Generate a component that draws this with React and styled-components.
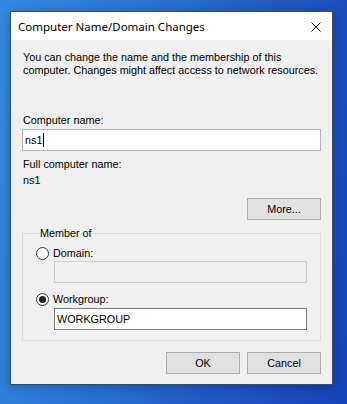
import React from 'react';
import styled, { createGlobalStyle } from 'styled-components';

const GlobalStyle = createGlobalStyle`
  html, body {
    margin: 0;
    padding: 0;
    height: 100%;
    overflow: hidden;
  }
  body {
    background: linear-gradient(100deg, #3389e0 0%, #2a74d6 35%, #1f56c2 70%, #1644b6 100%);
    font-family: "Liberation Sans", Arial, sans-serif;
  }
`;

const Desktop = styled.div`
  padding: 11px 0 0 10px;
`;

const Dialog = styled.div`
  width: 321px;
  height: 372px;
  border: 1px solid #3b4b63;
  background: #f0f0f0;
  display: flex;
  flex-direction: column;
  box-shadow: 0 2px 10px rgba(0, 0, 0, 0.25);
`;

const TitleBar = styled.div`
  height: 28px;
  background: #ffffff;
  display: flex;
  align-items: center;
  justify-content: space-between;
  padding: 0 11px 0 7px;
  font-family: "Segoe UI", "Noto Sans", sans-serif;
  font-size: 11.5px;
  color: #000;
`;

const Close = styled.svg`
  width: 10px;
  height: 10px;
  margin-top: 1px;
`;

const Content = styled.div`
  padding: 0 11px;
  font-size: 10.8px;
  line-height: 13px;
  color: #000;
  display: flex;
  flex-direction: column;
`;

const Text = styled.div`
  margin-top: ${p => p.$mt || 0}px;
  padding-left: 1px;
  white-space: nowrap;
`;

const Field = styled.div`
  box-sizing: border-box;
  height: ${p => p.$h || 22}px;
  margin-top: ${p => p.$mt || 0}px;
  margin-left: ${p => p.$ml || 0}px;
  border: 1px solid ${p => (p.$disabled ? '#cccccc' : p.$focus ? '#a9b7cf' : '#7a7a7a')};
  background: ${p => (p.$disabled ? '#f0f0f0' : '#ffffff')};
  padding: 0 2px;
  display: flex;
  align-items: center;
`;

const Caret = styled.span`
  display: inline-block;
  width: 1px;
  height: 14px;
  background: #000;
  margin-left: 1px;
`;

const ButtonRow = styled.div`
  display: flex;
  justify-content: flex-end;
  gap: 7px;
  margin-top: ${p => p.$mt || 0}px;
`;

const Button = styled.button`
  box-sizing: border-box;
  width: 74px;
  height: 22px;
  padding: 0;
  border: 1px solid #adadad;
  background: #e1e1e1;
  font-family: "Liberation Sans", Arial, sans-serif;
  font-size: 10.8px;
  color: #000;
`;

const Group = styled.fieldset`
  margin: 7px 0 0 0;
  padding: 0 13px 10px 13px;
  border: 1px solid #dcdcdc;
  min-width: 0;
`;

const Legend = styled.legend`
  padding: 0 1px;
  margin-left: 3px;
  line-height: 13px;
`;

const RadioRow = styled.label`
  display: flex;
  align-items: center;
  gap: 4px;
  height: 14px;
  margin-top: ${p => p.$mt || 0}px;
`;

const Radio = styled.span`
  box-sizing: border-box;
  width: 13px;
  height: 13px;
  border-radius: 50%;
  border: 1px solid #333;
  background: #fff;
  display: flex;
  align-items: center;
  justify-content: center;

  &::after {
    content: '';
    width: 7px;
    height: 7px;
    border-radius: 50%;
    background: #222;
    display: ${p => (p.$checked ? 'block' : 'none')};
  }
`;

export default function App() {
  return (
    <>
      <GlobalStyle />
      <Desktop>
        <Dialog>
          <TitleBar>
            <span>Computer Name/Domain Changes</span>
            <Close viewBox="0 0 10 10">
              <path d="M0.5 0.5 L9.5 9.5 M9.5 0.5 L0.5 9.5" stroke="#111" strokeWidth="1" />
            </Close>
          </TitleBar>
          <Content>
            <Text $mt={11}>
              You can change the name and the membership of this
              <br />
              computer. Changes might affect access to network resources.
            </Text>
            <Text $mt={37}>Computer name:</Text>
            <Field $mt={2} $focus>
              ns1<Caret />
            </Field>
            <Text $mt={7}>Full computer name:</Text>
            <Text $mt={3}>ns1</Text>
            <ButtonRow $mt={11}>
              <Button>More...</Button>
            </ButtonRow>
            <Group>
              <Legend>Member of</Legend>
              <RadioRow $mt={6}>
                <Radio />
                Domain:
              </RadioRow>
              <Field $mt={1} $ml={18} $disabled />
              <RadioRow $mt={9}>
                <Radio $checked />
                Workgroup:
              </RadioRow>
              <Field $mt={2} $ml={18}>
                WORKGROUP
              </Field>
            </Group>
            <ButtonRow $mt={11}>
              <Button>OK</Button>
              <Button>Cancel</Button>
            </ButtonRow>
          </Content>
        </Dialog>
      </Desktop>
    </>
  );
}
